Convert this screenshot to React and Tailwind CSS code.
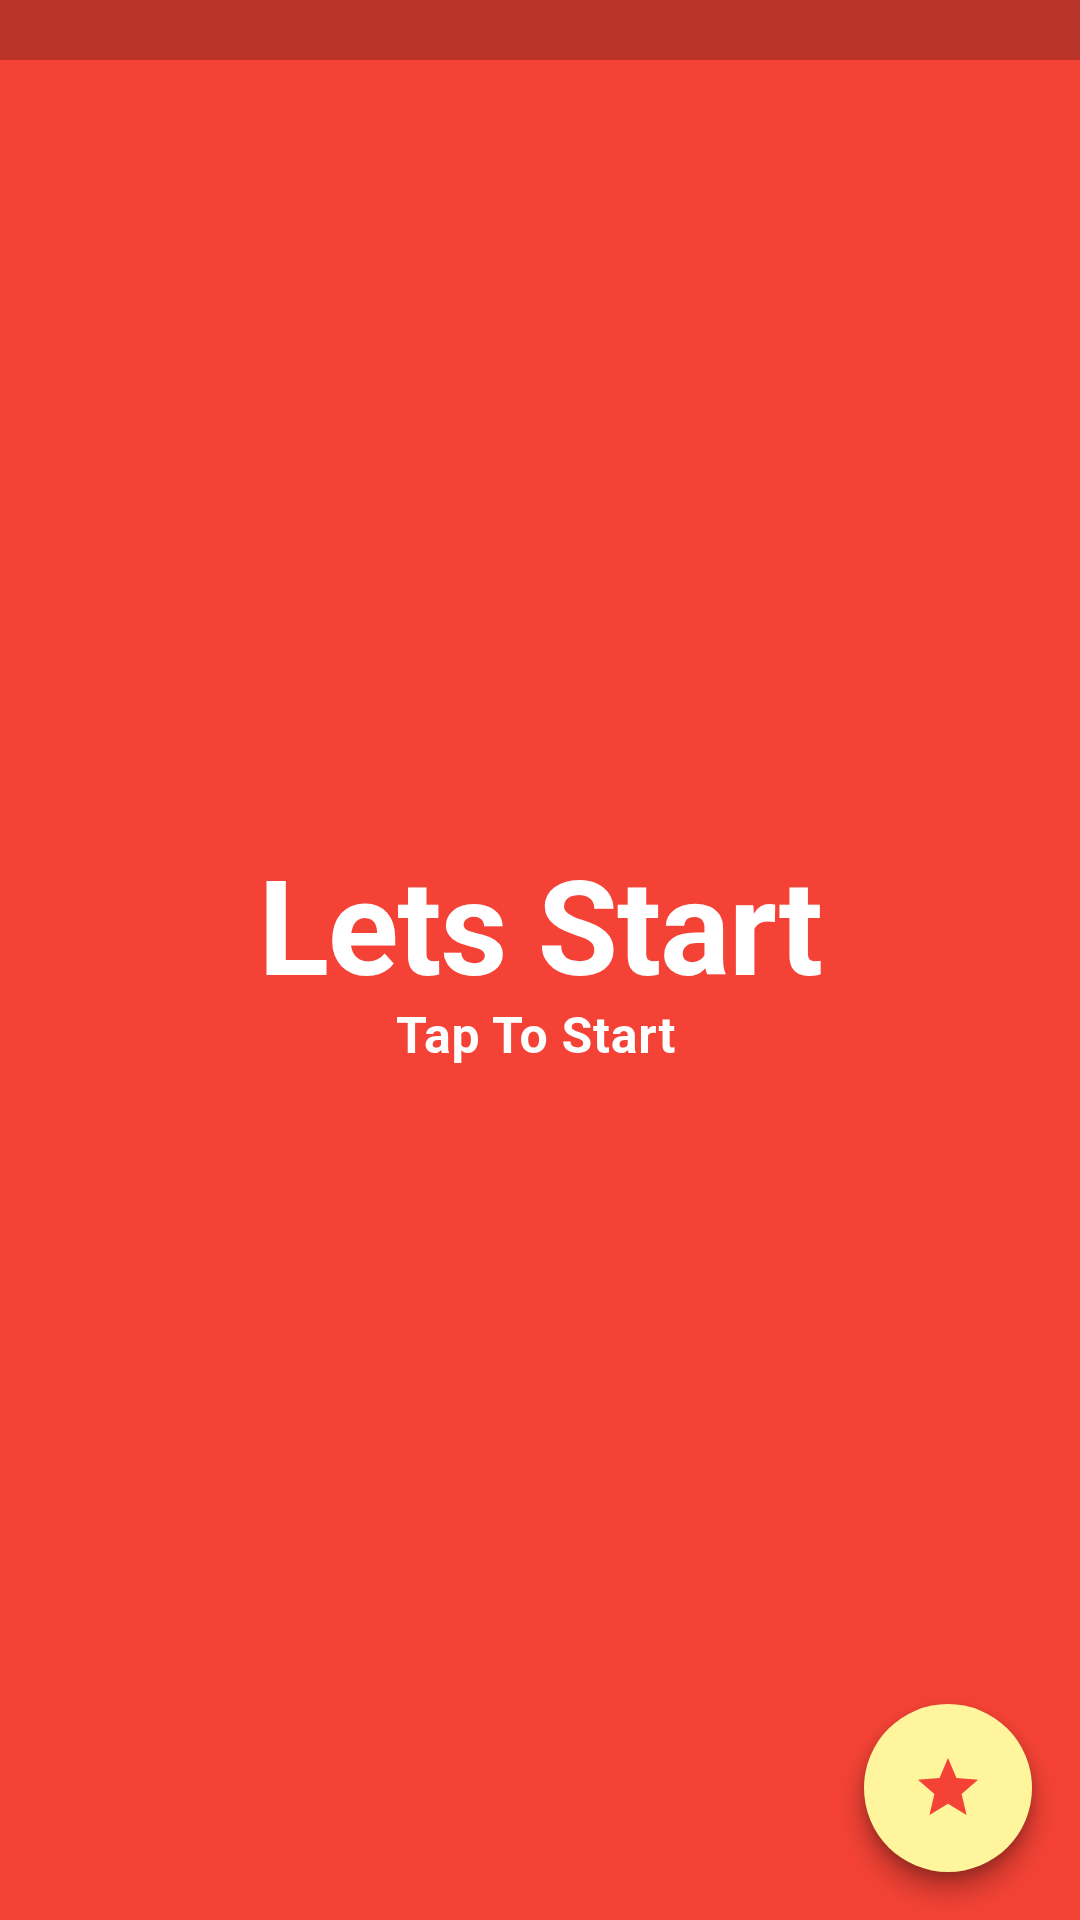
export default function App() {
  return (
    <div
      className="relative w-[1080px] h-[1920px] bg-[#f44336] flex flex-col overflow-hidden"
      style={{ fontFamily: "Roboto, 'Liberation Sans', sans-serif" }}
    >
      {/* status bar */}
      <div className="h-[60px] w-full bg-[#ba3329]" />

      {/* content */}
      <div className="flex-1 flex flex-col items-center pt-[805px] text-white">
        <h1 className="text-[131px] leading-none font-bold tracking-[-1.3px]">Lets Start</h1>
        <p className="mt-[15px] pr-[8px] text-[50px] leading-none font-bold tracking-[0.7px]">Tap To Start</p>
      </div>

      {/* fab */}
      <button className="absolute right-[48px] bottom-[48px] w-[168px] h-[168px] rounded-full bg-[#fff59d] flex items-center justify-center shadow-[0_18px_30px_rgba(0,0,0,0.28),0_6px_12px_rgba(0,0,0,0.18)]">
        <svg width="72" height="72" viewBox="0 0 24 24" fill="#f44336">
          <path d="M12 17.27L18.18 21l-1.64-7.03L22 9.24l-7.19-.61L12 2 9.19 8.63 2 9.24l5.46 4.73L5.82 21z" />
        </svg>
      </button>
    </div>
  )
}
